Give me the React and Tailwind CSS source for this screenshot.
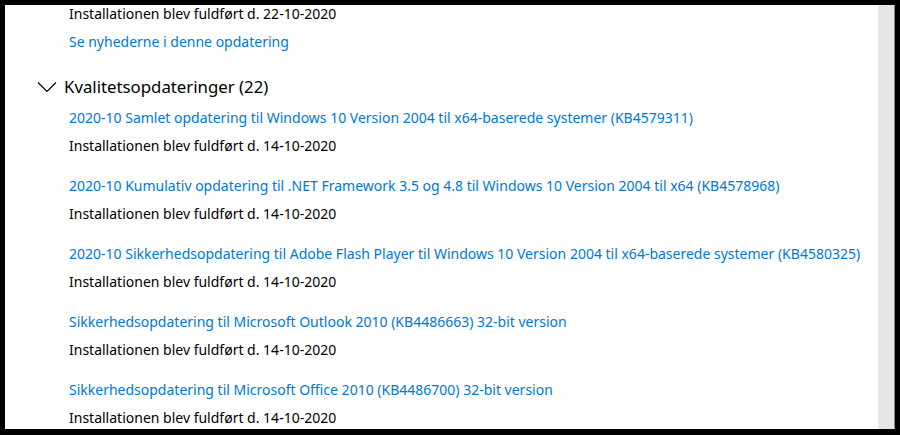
const updates = [
  { title: '2020-10 Samlet opdatering til Windows 10 Version 2004 til x64-baserede systemer (KB4579311)', date: '14-10-2020' },
  { title: '2020-10 Kumulativ opdatering til .NET Framework 3.5 og 4.8 til Windows 10 Version 2004 til x64 (KB4578968)', date: '14-10-2020' },
  { title: '2020-10 Sikkerhedsopdatering til Adobe Flash Player til Windows 10 Version 2004 til x64-baserede systemer (KB4580325)', date: '14-10-2020' },
  { title: 'Sikkerhedsopdatering til Microsoft Outlook 2010 (KB4486663) 32-bit version', date: '14-10-2020' },
  { title: 'Sikkerhedsopdatering til Microsoft Office 2010 (KB4486700) 32-bit version', date: '14-10-2020' },
]

const font = { fontFamily: '"Segoe UI", "Noto Sans", sans-serif' }

function Chevron() {
  return (
    <svg width="20" height="12" viewBox="0 0 20 12" className="shrink-0">
      <path d="M1 1.5 L10 10.5 L19 1.5" fill="none" stroke="#000" strokeWidth="1.2" />
    </svg>
  )
}

export default function App() {
  return (
    <div className="w-[900px] h-[435px] bg-black pt-[5px] pl-[5px] pr-[5px] pb-[6px] flex" style={font}>
      <div className="flex-1 bg-white overflow-hidden">
        <div className="-mt-[6px] pl-[64px]">
          <div className="h-[28px] flex items-center text-[14px] text-black">Installationen blev fuldført d. 22-10-2020</div>
          <div className="h-[28px] flex items-center text-[14px] text-[#0078d7]">Se nyhederne i denne opdatering</div>
        </div>
        <div className="mt-[18px] h-[28px] flex items-center pl-[32px] gap-[7px]">
          <Chevron />
          <span className="text-[16.8px] text-black">Kvalitetsopdateringer (22)</span>
        </div>
        <div className="pl-[64px]">
          {updates.map((u, i) => (
            <div key={i} className={i === 0 ? 'mt-[2px]' : 'mt-[12px]'}>
              <div className="h-[28px] flex items-center text-[14px] text-[#0078d7] whitespace-nowrap">{u.title}</div>
              <div className="h-[28px] flex items-center text-[14px] text-black">Installationen blev fuldført d. {u.date}</div>
            </div>
          ))}
        </div>
      </div>
      <div className="w-[16px] bg-[#e6e6e6]" />
      <div className="w-[1px] bg-[#8a8a8a]" />
    </div>
  )
}
